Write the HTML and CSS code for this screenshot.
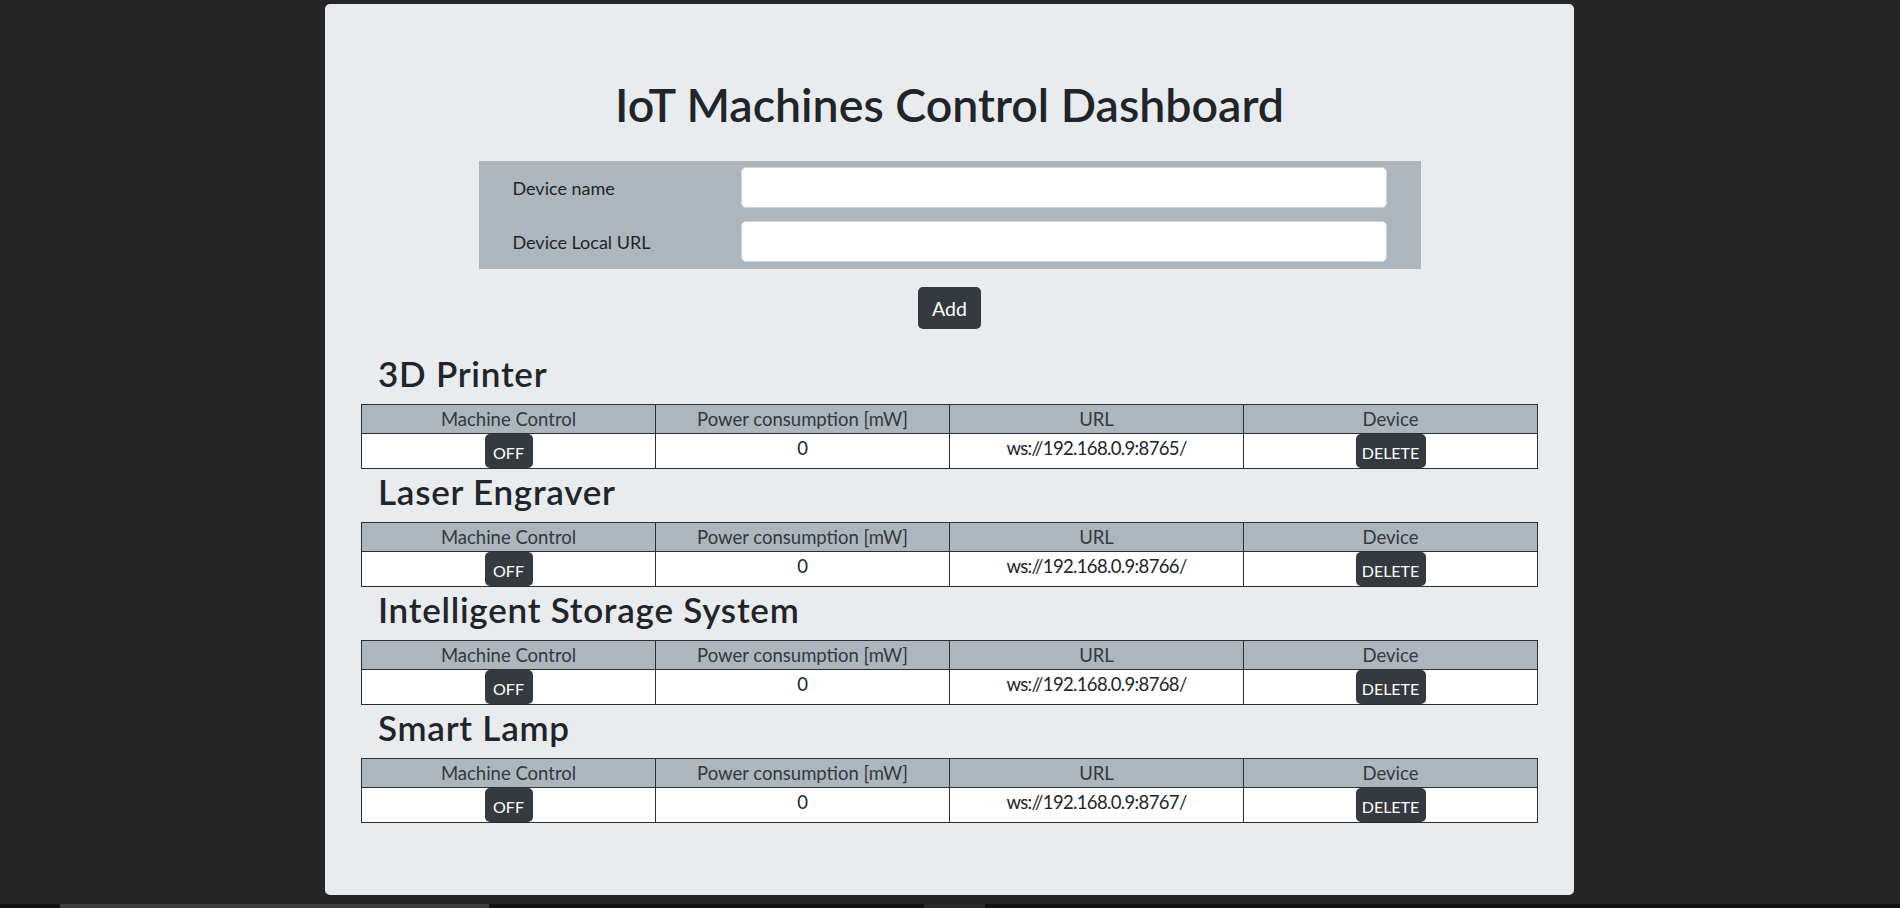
FILE: index.html
```html
<!DOCTYPE html>
<html lang="en">
<head>
<meta charset="utf-8">
<title>IoT Machines Control Dashboard</title>
<link rel="stylesheet" href="styles.css">
</head>
<body>
<main class="card">
  <h1 class="title">IoT Machines Control Dashboard</h1>
  <form class="add-form">
    <label class="form-label" for="name">Device name</label>
    <input class="form-input" id="name" type="text">
    <label class="form-label" for="url">Device Local URL</label>
    <input class="form-input" id="url" type="text">
  </form>
  <div class="add-row"><button class="btn btn-add" type="button">Add</button></div>

  <div class="devices">
    <section class="device">
      <h3 class="device-name">3D Printer</h3>
      <table class="device-table">
        <tr><th>Machine Control</th><th>Power consumption [mW]</th><th>URL</th><th>Device</th></tr>
        <tr><td><button class="btn btn-sm btn-off" type="button">OFF</button></td><td>0</td><td class="url">ws://192.168.0.9:8765/</td><td><button class="btn btn-sm btn-del" type="button">DELETE</button></td></tr>
      </table>
    </section>
    <section class="device">
      <h3 class="device-name">Laser Engraver</h3>
      <table class="device-table">
        <tr><th>Machine Control</th><th>Power consumption [mW]</th><th>URL</th><th>Device</th></tr>
        <tr><td><button class="btn btn-sm btn-off" type="button">OFF</button></td><td>0</td><td class="url">ws://192.168.0.9:8766/</td><td><button class="btn btn-sm btn-del" type="button">DELETE</button></td></tr>
      </table>
    </section>
    <section class="device">
      <h3 class="device-name">Intelligent Storage System</h3>
      <table class="device-table">
        <tr><th>Machine Control</th><th>Power consumption [mW]</th><th>URL</th><th>Device</th></tr>
        <tr><td><button class="btn btn-sm btn-off" type="button">OFF</button></td><td>0</td><td class="url">ws://192.168.0.9:8768/</td><td><button class="btn btn-sm btn-del" type="button">DELETE</button></td></tr>
      </table>
    </section>
    <section class="device">
      <h3 class="device-name">Smart Lamp</h3>
      <table class="device-table">
        <tr><th>Machine Control</th><th>Power consumption [mW]</th><th>URL</th><th>Device</th></tr>
        <tr><td><button class="btn btn-sm btn-off" type="button">OFF</button></td><td>0</td><td class="url">ws://192.168.0.9:8767/</td><td><button class="btn btn-sm btn-del" type="button">DELETE</button></td></tr>
      </table>
    </section>
  </div>
</main>
<div class="hscroll"><span class="thumb"></span><span class="thumb2"></span></div>
</body>
</html>
```
FILE: styles.css
```css
* { box-sizing: border-box; }
html, body { margin: 0; }
body {
  height: 908px;
  overflow: hidden;
  background: #262626;
  font-family: Lato, "Liberation Sans", sans-serif;
  color: #212529;
  display: flex;
  flex-direction: column;
}
.card {
  width: 1249px;
  height: 891px;
  margin: 4px 0 0 325px;
  padding: 70px 36px 0 36px;
  background: #e9ecef;
  border-radius: 5px;
}
.title {
  margin: 0;
  text-align: center;
  font-size: 46.5px;
  font-weight: 600;
  line-height: 60px;
}
.add-form {
  width: 942px;
  margin: 27px auto 0;
  padding: 6px 34px 7px 0;
  background: #adb5bd;
  display: grid;
  grid-template-columns: 262px 1fr;
  row-gap: 13px;
  align-items: center;
}
.form-label {
  padding-left: 34px;
  font-size: 18px;
  color: #212529;
}
.form-input {
  height: 41px;
  border: 1px solid #ced4da;
  border-radius: 5px;
  background: #fff;
  font: inherit;
}
.add-row {
  margin-top: 18px;
  text-align: center;
}
.btn {
  border: none;
  background: #343a40;
  color: #fff;
  font-family: inherit;
  border-radius: 5px;
  cursor: pointer;
}
.btn-add {
  height: 42px;
  width: 63px;
  padding: 0;
  font-size: 19.5px;
}
.devices { margin-top: 22px; }
.device-name {
  margin: 0 0 8px;
  padding-left: 17px;
  font-size: 35px;
  font-weight: 600;
  letter-spacing: 0.75px;
  line-height: 45px;
}
.device-table {
  width: 100%;
  border-collapse: collapse;
  table-layout: fixed;
  font-size: 18.5px;
  text-align: center;
}
.device-table th,
.device-table td {
  border: 1px solid #2b2f33;
  padding: 0;
}
.device-table th {
  height: 28px;
  line-height: 28px;
  background: #adb5bd;
  font-weight: 400;
  color: #343a40;
}
.device-table td {
  height: 34px;
  line-height: 28px;
  vertical-align: top;
  background: #fff;
  color: #212529;
}
.device-table td.url {
  letter-spacing: -0.65px;
}
.btn-sm {
  display: inline-block;
  vertical-align: top;
  height: 34px;
  padding: 3px 0 0;
  font-size: 16px;
  line-height: 30px;
  letter-spacing: 0;
}
.btn-off { width: 48px; }
.btn-del { width: 70px; }
.hscroll {
  margin-top: auto;
  height: 4px;
  background: #111;
  display: flex;
}
.thumb {
  margin-left: 60px;
  width: 429px;
  background: #3d3d3d;
}
.thumb2 {
  margin-left: 435px;
  width: 61px;
  background: #2a2a2a;
}
```
